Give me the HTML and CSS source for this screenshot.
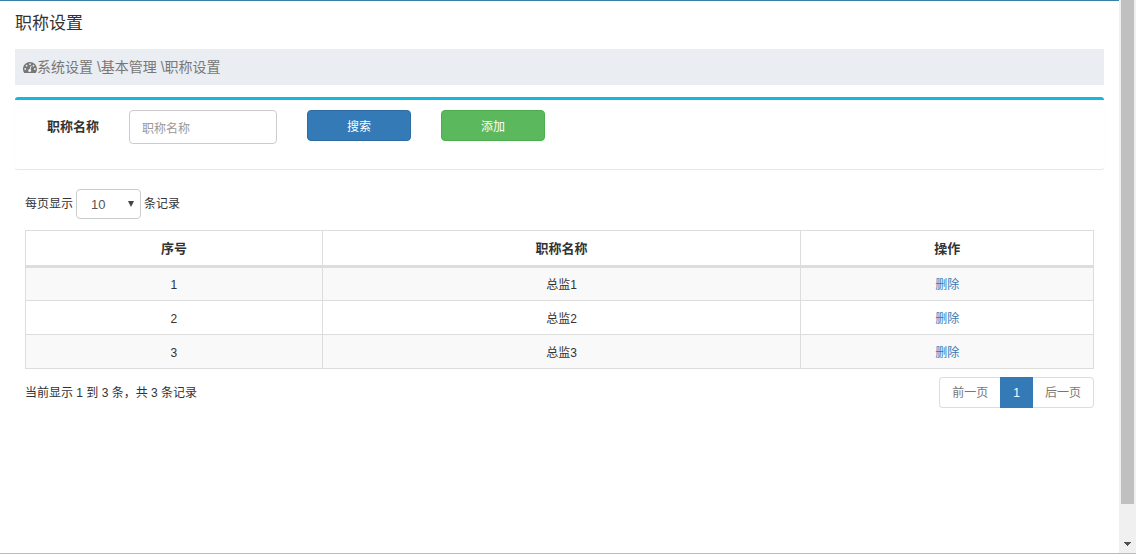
FILE: index.html
```html
<!DOCTYPE html>
<html lang="zh-CN">
<head>
<meta charset="utf-8">
<title>职称设置</title>
<link rel="stylesheet" href="styles.css">
</head>
<body>
<div class="window">
  <main class="page">
    <h1 class="title">职称设置</h1>
    <nav class="breadcrumb">
      <svg class="gauge" viewBox="0 0 14 12" aria-hidden="true">
        <path fill="#777" d="M7 1a7 7 0 0 1 7 7c0 1.300-.4 2.600-1.100 3.700-.1.200-.3.300-.5.300H1.600c-.2 0-.4-.1-.5-.3A7 7 0 0 1 7 1z"/>
        <g fill="#eaedf2"><circle cx="2.200" cy="8" r=".9"/><circle cx="3.600" cy="4.700" r=".9"/><circle cx="7" cy="3.200" r=".9"/><circle cx="10.400" cy="4.700" r=".9"/><circle cx="11.800" cy="8" r=".9"/><circle cx="6.700" cy="9.500" r="1.500"/></g>
        <path d="M6.800 9.300L8 5.200" stroke="#eaedf2" stroke-width="1" stroke-linecap="round"/>
      </svg>
      <span>系统设置 \基本管理 \职称设置</span>
    </nav>
    <form class="search-box">
      <label class="search-label" for="name">职称名称</label>
      <input class="search-input" id="name" type="text" placeholder="职称名称">
      <button class="btn btn-primary" type="button">搜索</button>
      <button class="btn btn-success" type="button">添加</button>
    </form>
    <section class="records">
      <div class="length">
        <label for="size">每页显示</label>
        <span class="select-wrap">
          <select class="size-select" id="size"><option>10</option></select>
          <svg class="caret" viewBox="0 0 6 6" aria-hidden="true"><path d="M0 0h6L3 6z" fill="#444"/></svg>
        </span>
        <span>条记录</span>
      </div>
      <table class="grid">
        <colgroup><col class="col-index"><col class="col-name"><col class="col-action"></colgroup>
        <thead><tr><th>序号</th><th>职称名称</th><th>操作</th></tr></thead>
        <tbody>
          <tr><td>1</td><td>总监1</td><td><a class="link" href="#">删除</a></td></tr>
          <tr><td>2</td><td>总监2</td><td><a class="link" href="#">删除</a></td></tr>
          <tr><td>3</td><td>总监3</td><td><a class="link" href="#">删除</a></td></tr>
        </tbody>
      </table>
      <div class="footer">
        <p class="info">当前显示 1 到 3 条，共 3 条记录</p>
        <nav class="pager">
          <a class="page-link" href="#">前一页</a>
          <a class="page-link page-current" href="#">1</a>
          <a class="page-link" href="#">后一页</a>
        </nav>
      </div>
    </section>
  </main>
  <div class="scrollbar" aria-hidden="true">
    <div class="track"><div class="thumb"></div></div>
    <svg class="arrow" viewBox="0 0 17 17"><path d="M5 6h7v1h-1v1h-1v1H9v1H8V9H7V8H6V7H5z" fill="#505050"/></svg>
  </div>
</div>
</body>
</html>
```
FILE: styles.css
```css
* { box-sizing: border-box; }

body {
  margin: 0;
  background: #fff;
  color: #333;
  font: 12px/18px "Liberation Sans", "Noto Sans CJK SC", sans-serif;
}

.window {
  display: flex;
  min-height: 100vh;
  border-bottom: 1px solid #bbb;
}

.page {
  flex: 1;
  min-width: 0;
  padding: 13px 15px 0;
  border-top: 1px solid #3c7fa8;
}

.title {
  margin: 0 0 15px;
  font-size: 17px;
  line-height: 20px;
  font-weight: 400;
}

.breadcrumb {
  display: flex;
  align-items: center;
  height: 36px;
  padding: 0 8px;
  background: #eaedf2;
  color: #777;
  font-size: 14px;
}

.gauge {
  width: 14px;
  height: 12px;
}

.search-box {
  display: flex;
  align-items: flex-start;
  margin-top: 12px;
  padding: 10px 32px 25px;
  border-top: 3px solid #12b8de;
  border-radius: 3px;
  box-shadow: 0 1px 1px rgba(0, 0, 0, .1);
}

.search-label {
  margin-right: 30px;
  font-size: 13px;
  line-height: 34px;
  font-weight: 700;
}

.search-input {
  width: 148px;
  height: 34px;
  margin-right: 30px;
  padding: 4px 12px 0;
  border: 1px solid #ccc;
  border-radius: 4px;
  background: #fff;
  color: #555;
  font: inherit;
}

.search-input::placeholder { color: #999; opacity: 1; }

.btn {
  width: 104px;
  height: 31px;
  margin-right: 30px;
  padding: 2px 0 0;
  border: 1px solid;
  border-radius: 4px;
  color: #fff;
  font: inherit;
}

.btn-primary { background: #337ab7; border-color: #2e6da4; }
.btn-success { background: #5cb85c; border-color: #4cae4c; }

.records { padding: 20px 10px; }

.length {
  display: flex;
  align-items: center;
  gap: 3px;
}

.select-wrap { position: relative; display: flex; }

.size-select {
  width: 65px;
  height: 30px;
  padding: 2px 14px 0;
  border: 1px solid #ccc;
  border-radius: 4px;
  appearance: none;
  background: #fff;
  color: #555;
  font: inherit;
  font-size: 13px;
}

.caret {
  position: absolute;
  right: 7px;
  top: 12px;
  width: 6px;
  height: 6px;
  pointer-events: none;
}

.grid {
  width: 100%;
  margin-top: 11px;
  border-collapse: collapse;
  table-layout: fixed;
}

.col-index { width: 27.8%; }
.col-name { width: 44.8%; }
.col-action { width: 27.4%; }

.grid th,
.grid td {
  height: 34px;
  padding: 2px 0 0;
  border: 1px solid #ddd;
  text-align: center;
}

.grid th {
  height: 36px;
  padding: 1px 0 0;
  border-bottom-width: 3px;
  font-size: 13px;
}

.grid tbody tr:nth-child(odd) { background: #f9f9f9; }

.link { color: #337ab7; text-decoration: none; }

.footer {
  display: flex;
  justify-content: space-between;
  align-items: center;
  margin-top: 8px;
}

.info { margin: 0; }

.pager { display: flex; }

.page-link {
  height: 31px;
  padding: 0 12px;
  border: 1px solid #ddd;
  background: #fff;
  color: #777;
  line-height: 31px;
  text-decoration: none;
}

.page-link:first-child { border-right: 0; border-radius: 4px 0 0 4px; }
.page-link:last-child { border-left: 0; border-radius: 0 4px 4px 0; }

.page-current {
  border-color: #337ab7;
  background: #337ab7;
  color: #fff;
}

.scrollbar {
  display: flex;
  flex-direction: column;
  width: 17px;
  background: #f0f0f0;
}

.track { flex: 1; padding: 0 2px; }

.thumb { height: 94%; background: #c0c0c0; }

.arrow { width: 17px; height: 17px; }
```
